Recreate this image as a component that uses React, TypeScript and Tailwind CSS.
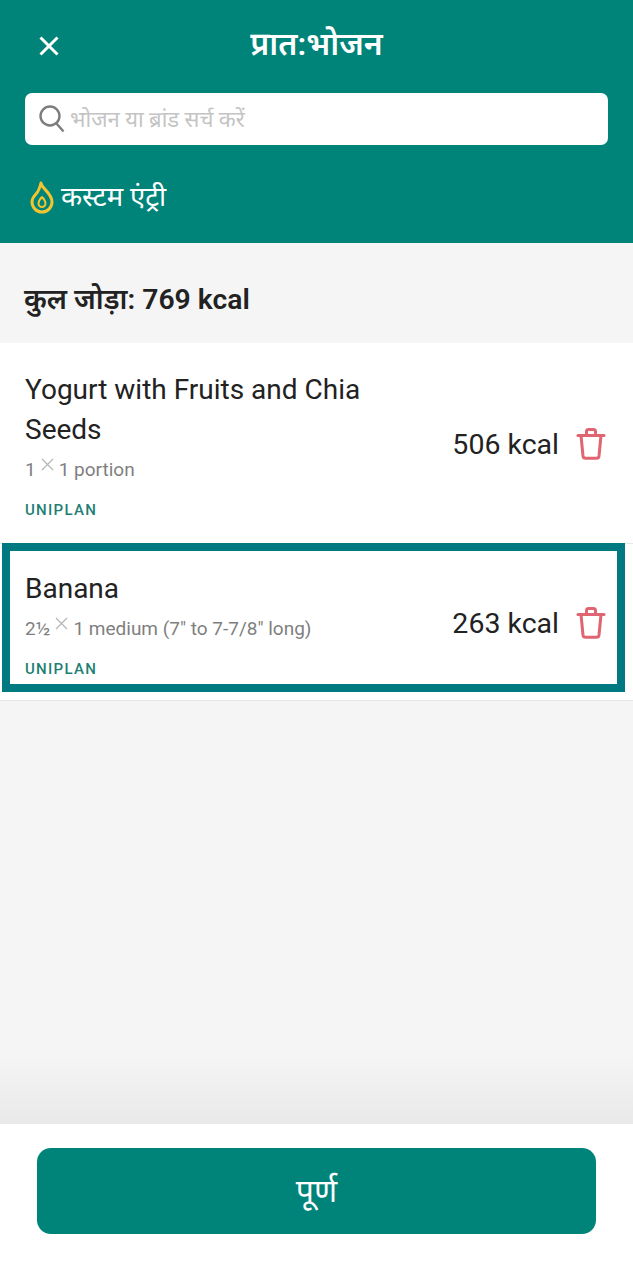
import React from "react";

const font = "font-['Roboto','Noto_Sans','Noto_Sans_Devanagari',sans-serif]";

function Trash() {
  return (
    <svg width="30" height="32" viewBox="0 0 30 32" fill="none" stroke="#e06472" strokeWidth="3" strokeLinejoin="round" strokeLinecap="round" className="shrink-0 mt-[2px]">
      <path d="M2 7.500h26" />
      <path d="M10.500 7.500V3.500a2 2 0 0 1 2-2h5a2 2 0 0 1 2 2v4" />
      <path d="M5 7.500l2 20.500a2.500 2.500 0 0 0 2.500 2.200h11a2.500 2.500 0 0 0 2.500-2.200l2-20.500" />
    </svg>
  );
}

function Row({ name, amount, unit, kcal, className }: { name: string[]; amount: string; unit: string; kcal: string; className: string }) {
  return (
    <div className={"relative flex items-center bg-white border-b border-[#e6e6e6] pl-[25px] pr-[27px] " + className}>
      <div className="flex-1 min-w-0 mt-[4px]">
        {name.map((n) => (
          <div key={n} className="text-[28px] leading-[40px] text-[#222222]">{n}</div>
        ))}
        <div className="flex items-start text-[19px] leading-[26px] h-[26px] text-[#7f7f7f] mt-[7px]">
          <span>{amount}</span>
          <svg width="13" height="13" viewBox="0 0 13 13" stroke="#b5b5b5" strokeWidth="1.2" className="mx-[5px] mt-[1px]">
            <path d="M1 1l11 11M12 1L1 12" />
          </svg>
          <span>{unit}</span>
        </div>
        <div className="text-[15px] leading-[20px] font-medium tracking-[1.3px] text-[#1f7f74] mt-[17px]">UNIPLAN</div>
      </div>
      <div className="text-[28.500px] leading-[36px] text-[#222222] mr-[17px] mt-[3px]">{kcal}</div>
      <Trash />
    </div>
  );
}

export default function App() {
  return (
    <div className={"relative w-[633px] h-[1280px] flex flex-col bg-[#f5f5f5] overflow-hidden " + font}>
      <header className="h-[243px] bg-[#00847a] px-[25px] shrink-0">
        <div className="relative h-[93px] flex items-center justify-center">
          <svg width="20" height="20" viewBox="0 0 20 20" stroke="white" strokeWidth="3" className="absolute left-[14px] top-[36px]">
            <path d="M1.500 1.500l17 17M18.500 1.500l-17 17" />
          </svg>
          <h1 className="text-[32px] leading-[40px] font-semibold text-white mb-[5px]">प्रात:भोजन</h1>
        </div>
        <div className="h-[52px] bg-white rounded-[7px] flex items-center pl-[14px]">
          <svg width="26" height="28" viewBox="0 0 26 28" fill="none" stroke="#7d7d7d" strokeWidth="2.400">
            <circle cx="11" cy="11" r="9.500" />
            <path d="M17.500 18.500l7 8" />
          </svg>
          <span className="text-[22px] text-[#c4c4c4] ml-[5px]">भोजन या ब्रांड सर्च करें</span>
        </div>
        <div className="flex items-center mt-[34px] pl-[5px]">
          <svg width="24" height="33" viewBox="0 0 24 33" fill="none" stroke="#f2c530" strokeWidth="3" strokeLinejoin="round">
            <path d="M11 2c1 6 11 10 11 19a10 10 0 0 1-20 0c0-4 2-6 4-8 1-1 3-3 5-11z" />
            <path d="M12 16c2 2 3.500 4.500 3.500 6.500a3.500 3.500 0 0 1-7 0c0-2 1.500-4.500 3.500-6.500z" strokeWidth="2" />
          </svg>
          <span className="text-[27.500px] leading-[36px] text-white ml-[7px]">कस्टम एंट्री</span>
        </div>
      </header>

      <div className="h-[100px] flex items-center px-[24px] pt-[14px] shrink-0">
        <span className="text-[28.300px] font-semibold text-[#222222]">कुल जोड़ा: 769 kcal</span>
      </div>

      <Row name={["Yogurt with Fruits and Chia", "Seeds"]} amount="1" unit="1 portion" kcal="506 kcal" className="h-[201px] shrink-0" />
      <Row name={["Banana"]} amount="2½" unit={'1 medium (7" to 7-7/8" long)'} kcal="263 kcal" className="h-[157px] shrink-0" />

      <div className="flex-1 flex flex-col justify-end">
        <div className="h-[70px] bg-gradient-to-b from-[#f5f5f5] to-[#e9e9e9]" />
      </div>

      <footer className="h-[156px] bg-white px-[37px] pt-[24px] shrink-0">
        <button className="w-[559px] h-[86px] bg-[#00847a] rounded-[14px] text-white text-[32px] flex items-center justify-center">पूर्ण</button>
      </footer>

      <div className="absolute left-[2px] top-[543px] w-[623px] h-[149px] border-[8.500px] border-[#007a80] pointer-events-none" />
    </div>
  );
}
